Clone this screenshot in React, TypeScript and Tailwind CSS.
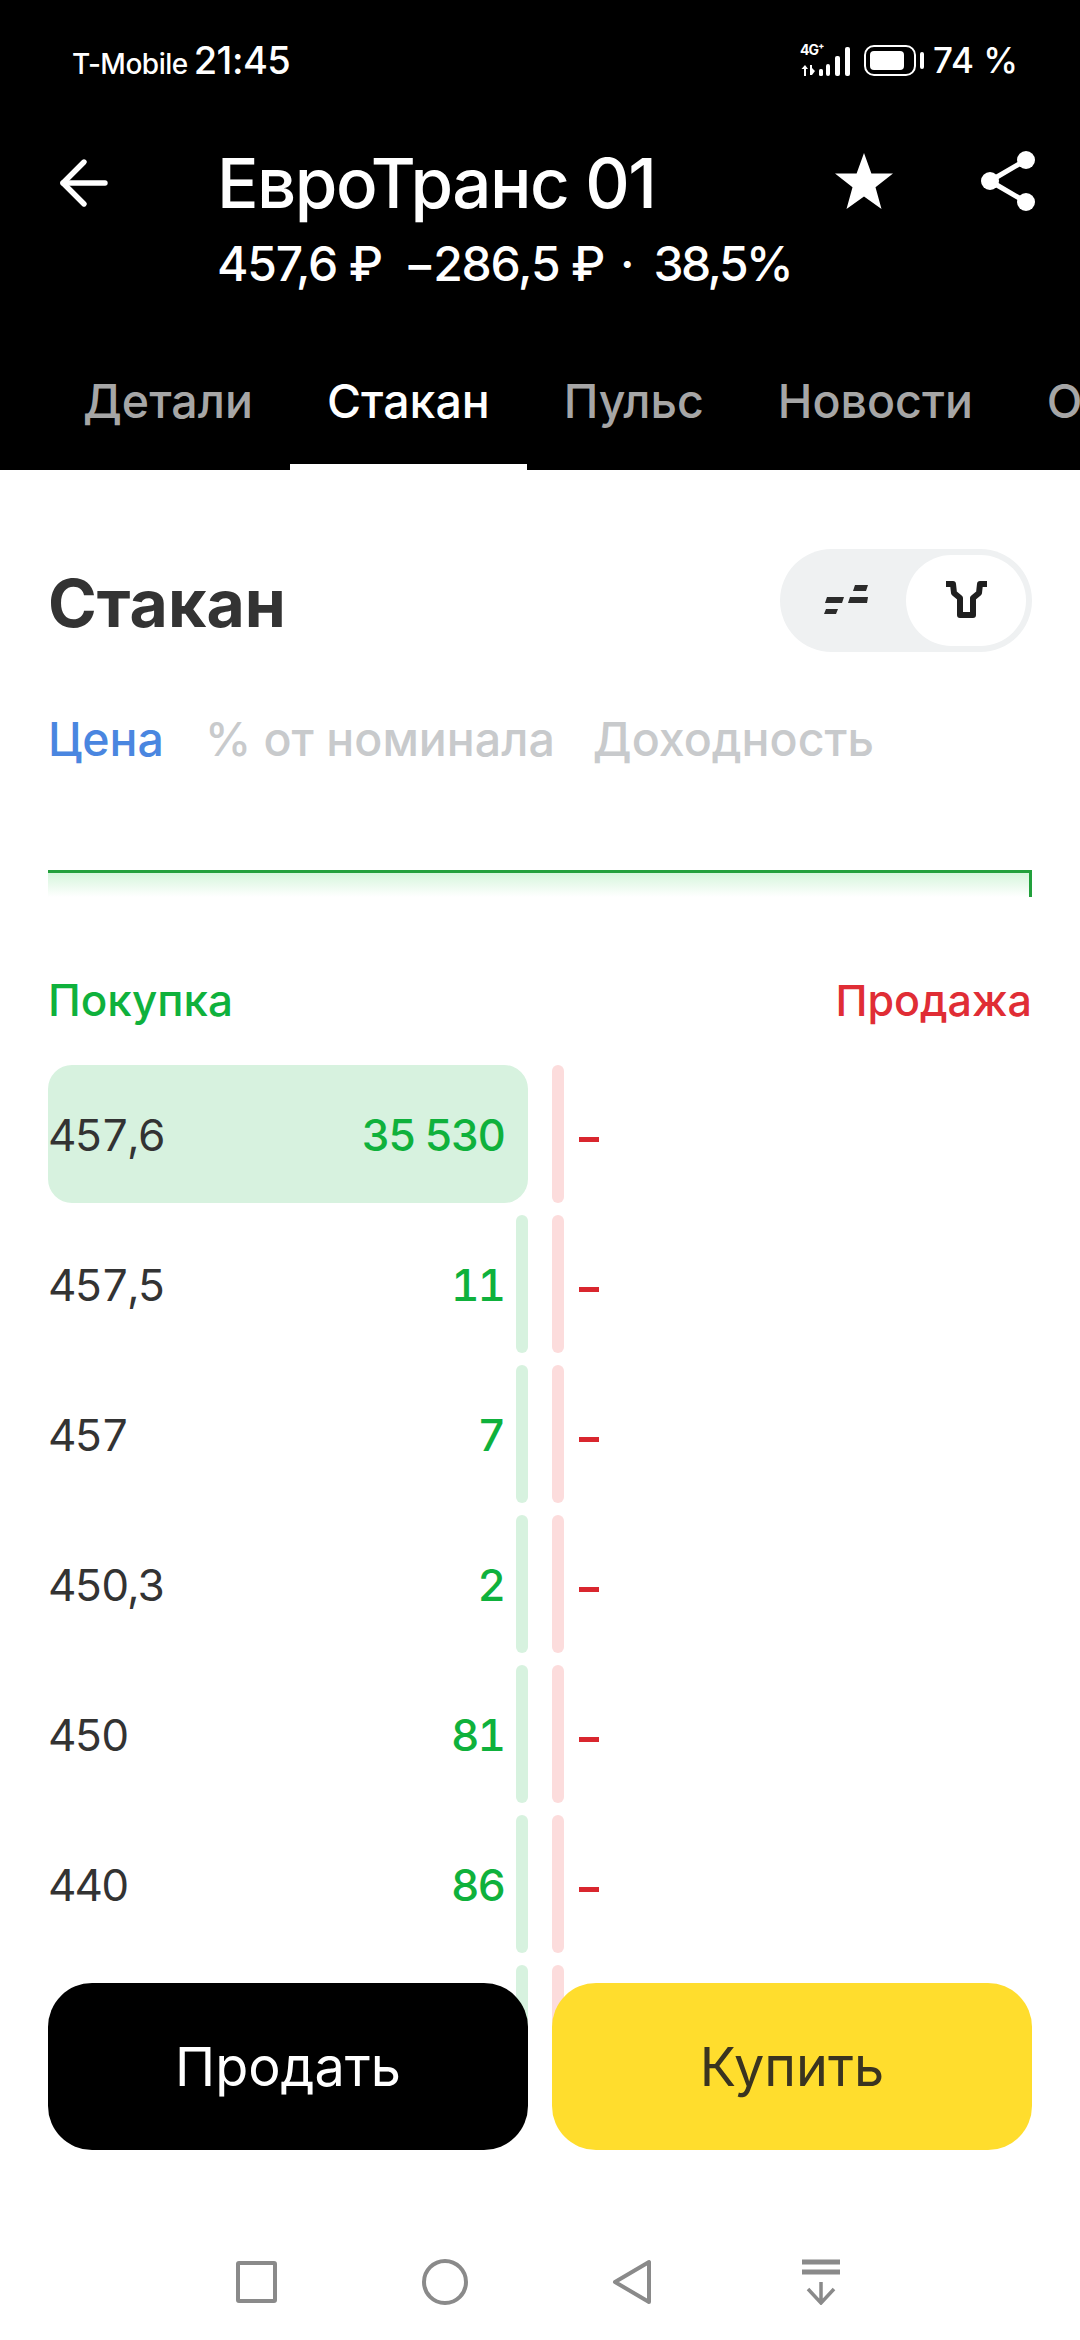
import React from 'react';
import { ArrowLeft } from 'lucide-react';

const rows = [
  { price: '457,6', qty: '35 530', full: true },
  { price: '457,5', qty: '11' },
  { price: '457', qty: '7' },
  { price: '450,3', qty: '2' },
  { price: '450', qty: '81' },
  { price: '440', qty: '86' },
  { price: '', qty: '' },
];

const tabs = ['Детали', 'Стакан', 'Пульс', 'Новости', 'О'];

const StatusIcons = () => (
  <div className="flex items-center">
    <div className="relative w-[52px] h-[31px]">
      <span className="absolute left-0 top-[-3px] text-[14px] leading-[16px] font-bold tracking-[-1px] text-white">4G⁺</span>
      <svg width="52" height="31" viewBox="0 0 52 31" fill="#fff">
        <path d="M4 31V24H1.5L5 20l3 4H6v7z" />
        <path d="M10 20h2v3l3 3-3 4h-2z" />
        <rect x="19" y="24" width="4" height="7" rx="1.5" />
        <rect x="26" y="19" width="4" height="12" rx="2" />
        <rect x="35" y="11" width="5" height="20" rx="2" />
        <rect x="45" y="2" width="5" height="29" rx="2" />
      </svg>
    </div>
    <svg className="ml-[12px]" width="60" height="31" viewBox="0 0 60 31" fill="none">
      <rect x="1" y="1" width="50" height="29" rx="9" stroke="#fff" strokeWidth="2" />
      <rect x="6" y="6" width="34" height="19" rx="4" fill="#fff" />
      <rect x="56" y="7" width="4" height="17" rx="2" fill="#fff" />
    </svg>
  </div>
);

const App: React.FC = () => {
  return (
    <div className="w-[1080px] h-[2340px] flex flex-col bg-white overflow-hidden font-['Inter','Noto_Sans',sans-serif]">
      <header className="h-[470px] shrink-0 bg-black text-white flex flex-col">
        <div className="h-[120px] pl-[72px] pr-[62px] flex items-center justify-between">
          <div className="flex items-baseline">
            <span className="text-[28px] font-medium tracking-[-0.5px]">T-Mobile</span>
            <span className="ml-[6px] text-[38px] font-medium tracking-[-0.5px]">21:45</span>
          </div>
          <div className="flex items-center">
            <StatusIcons />
            <span className="ml-[9px] text-[35px] font-medium">74 %</span>
          </div>
        </div>

        <div className="h-[120px] flex">
          <div className="w-[217px] shrink-0 pl-[48px] pt-[27px]">
            <ArrowLeft size={72} strokeWidth={1.8} />
          </div>
          <div className="flex-1 pt-[20px]">
            <div className="text-[69px] leading-[86px] font-medium tracking-[-1.5px]">ЕвроТранс 01</div>
            <div className="mt-[10px] flex text-[48px] leading-[56px] font-medium tracking-[-1.2px] whitespace-nowrap">
              <span>457,6 ₽</span>
              <span className="ml-[22px]">−286,5 ₽</span>
              <span className="ml-[16px]">·</span>
              <span className="ml-[20px] tracking-[-2.6px]">38,5%</span>
            </div>
          </div>
          <div className="w-[260px] shrink-0 flex items-start pt-[33px] pl-[15px]">
            <svg width="58" height="56" viewBox="0 0 58 56" fill="#fff">
              <path d="M29 0l7.4 20.5H58L40.5 34.2 46.5 56 29 43.6 11.5 56l6-21.8L0 20.5h21.6z" />
            </svg>
            <svg className="ml-[88px] -mt-[2px]" width="54" height="60" viewBox="0 0 54 60">
              <path d="M9 30L45 9M9 30l36 21" stroke="#fff" strokeWidth="5" fill="none" />
              <circle cx="9" cy="30" r="9" fill="#fff" />
              <circle cx="45" cy="9" r="9" fill="#fff" />
              <circle cx="45" cy="51" r="9" fill="#fff" />
            </svg>
          </div>
        </div>

        <div className="mt-auto h-[110px] pl-[46px] flex overflow-hidden">
          {tabs.map((t, i) => (
            <div
              key={t}
              className={
                i === 1
                  ? 'h-full shrink-0 px-[37px] pt-[11px] text-[46.5px] leading-[60px] font-medium text-white border-b-[6px] border-white'
                  : 'h-full shrink-0 px-[37px] pt-[11px] text-[46.5px] leading-[60px] font-medium text-[#a6a6a6]'
              }
            >
              {t}
            </div>
          ))}
        </div>
      </header>

      <main className="flex-1 flex flex-col px-[48px] relative min-h-0">
        <div className="flex items-center justify-between pt-[78px]">
          <h1 className="text-[66px] leading-[104px] font-bold text-[#333333] relative top-[3px]">Стакан</h1>
          <div className="w-[252px] h-[103px] rounded-full bg-[#eff1f2] p-[6px] flex items-center justify-between">
            <div className="w-[120px] flex justify-center">
              <svg width="44" height="30" viewBox="0 0 44 30" fill="#2b2b2b">
                <path d="M3 12h17l-2 6H1zM2 24h12l-2 5H0zM31 0h13l-2 6H29zM26 12h18l-1 6H24z" />
              </svg>
            </div>
            <div className="w-[120px] h-[91px] rounded-full bg-white flex items-center justify-center">
              <svg width="43" height="38" viewBox="0 0 43 38" fill="none">
                <path d="M1 3h7l1 9 6 5v17h13V17l6-5 1-9h7" stroke="#1f1f1f" strokeWidth="6" strokeLinejoin="round" />
              </svg>
            </div>
          </div>
        </div>

        <div className="flex mt-[57px] text-[46.5px] leading-[60px] font-medium text-[#c8cacc]">
          <span className="text-[#4a86e0]">Цена</span>
          <span className="ml-[41px]">% от номинала</span>
          <span className="ml-[38px]">Доходность</span>
        </div>

        <div className="mt-[101px] h-[27px] border-t-[3px] border-r-[3px] border-[#22a03c]">
          <div className="h-[24px] bg-gradient-to-b from-[#d5f5dc] to-white" />
        </div>

        <div className="flex justify-between mt-[76px] text-[44px] leading-[54px] font-medium">
          <span className="text-[#0fb13c]">Покупка</span>
          <span className="text-[#e02d35] text-[43px]">Продажа</span>
        </div>

        <div className="mt-[38px] flex-1 min-h-0 overflow-hidden flex flex-col gap-[12px]">
          {rows.map((r, i) => (
            <div key={i} className="flex h-[138px] shrink-0 gap-[24px]">
              <div className="relative w-[480px] flex items-center justify-between rounded-[24px] pr-[24px]">
                <div
                  className={
                    r.full
                      ? 'absolute inset-0 rounded-[24px] bg-[#d7f2df]'
                      : 'absolute right-0 top-0 bottom-0 w-[12px] rounded-full bg-[#d7f2df]'
                  }
                />
                <span className="relative top-[1px] text-[44px] tabular-nums tracking-[-2px] text-[#333333]">{r.price}</span>
                <span className="relative top-[1px] text-[44px] tabular-nums tracking-[-2px] font-medium text-[#0fb13c]">{r.qty}</span>
              </div>
              <div className="flex-1 flex items-center">
                <div className="w-[12px] h-full rounded-full bg-[#fcdcdc]" />
                {r.price && <div className="ml-[15px] w-[20px] h-[5px] bg-[#d9262e] mt-[11px]" />}
              </div>
            </div>
          ))}
        </div>

        <div className="absolute left-[48px] right-[48px] top-[1513px] flex gap-[24px]">
          <button className="flex-1 h-[167px] rounded-[44px] bg-black text-white text-[54px]">Продать</button>
          <button className="flex-1 h-[167px] rounded-[44px] bg-[#ffdd2d] text-[#3a3420] text-[54px]">Купить</button>
        </div>

        <nav className="h-[190px] shrink-0 -mx-[48px] bg-white flex items-start pt-[109px] pl-[236px]">
          <div className="w-[41px] h-[42px] mt-[2px] rounded-[3px] border-[4px] border-[#8a8a8a]" />
          <div className="ml-[145px] w-[46px] h-[46px] rounded-full border-[4px] border-[#8a8a8a]" />
          <svg className="ml-[144px]" width="40" height="46" viewBox="0 0 40 46" fill="none">
            <path d="M37 3v40L3 23z" stroke="#8a8a8a" strokeWidth="4" strokeLinejoin="round" />
          </svg>
          <svg className="ml-[149px]" width="40" height="46" viewBox="0 0 40 46" fill="none" stroke="#8a8a8a">
            <path d="M1 3h38M1 13h38" strokeWidth="5" />
            <path d="M20 23v21M7 30l13 14 13-14" strokeWidth="3.5" />
          </svg>
        </nav>
      </main>
    </div>
  );
};

export default App;
